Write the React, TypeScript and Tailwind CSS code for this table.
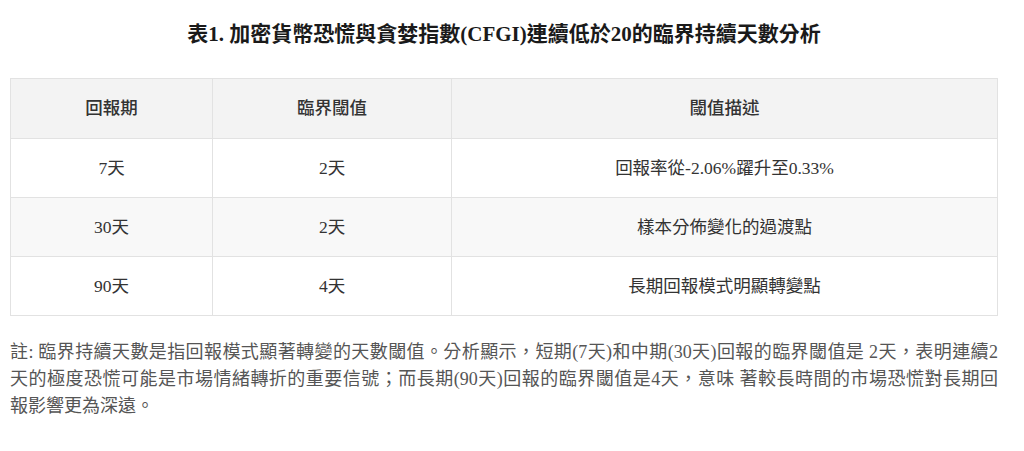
const rows = [
  { period: '7天', threshold: '2天', desc: '回報率從-2.06%躍升至0.33%' },
  { period: '30天', threshold: '2天', desc: '樣本分佈變化的過渡點' },
  { period: '90天', threshold: '4天', desc: '長期回報模式明顯轉變點' },
];

const noteLines = [
  '註: 臨界持續天數是指回報模式顯著轉變的天數閾值。分析顯示，短期(7天)和中期(30天)回報的臨界閾值是 2天，表明連續2',
  '天的極度恐慌可能是市場情緒轉折的重要信號；而長期(90天)回報的臨界閾值是4天，意味 著較長時間的市場恐慌對長期回',
  '報影響更為深遠。',
];

const font = { fontFamily: '"Liberation Serif", "Noto Sans CJK TC", serif' };

export default function App() {
  return (
    <div className="w-[1008px] bg-white px-[10px] pt-[22px] text-[#333]" style={font}>
      <h1 className="text-center text-[21px] font-bold leading-6 text-[#1a1a1a]">
        表1. 加密貨幣恐慌與貪婪指數(CFGI)連續低於20的臨界持續天數分析
      </h1>

      <table className="mt-8 w-full border-collapse border border-[#e2e2e2] text-[17.5px]">
        <colgroup>
          <col className="w-[202px]" />
          <col className="w-[239px]" />
          <col />
        </colgroup>
        <thead>
          <tr className="h-[60px] bg-[#f3f3f3]">
            <th className="border border-[#e2e2e2] font-medium">回報期</th>
            <th className="border border-[#e2e2e2] font-medium">臨界閾值</th>
            <th className="border border-[#e2e2e2] font-medium">閾值描述</th>
          </tr>
        </thead>
        <tbody>
          {rows.map((r, i) => (
            <tr key={r.period} className={i === 1 ? 'h-[59px] bg-[#f8f8f8]' : 'h-[59px] bg-white'}>
              <td className="border border-[#e2e2e2] text-center">{r.period}</td>
              <td className="border border-[#e2e2e2] text-center">{r.threshold}</td>
              <td className="border border-[#e2e2e2] text-center">{r.desc}</td>
            </tr>
          ))}
        </tbody>
      </table>

      <div className="mt-[23px] pb-10 text-[18px] leading-[27px] text-[#555]">
        {noteLines.map((line, i) => (
          <span
            key={i}
            className={i < noteLines.length - 1 ? 'block text-justify [text-align-last:justify]' : 'block'}
          >
            {line}
          </span>
        ))}
      </div>
    </div>
  );
}
